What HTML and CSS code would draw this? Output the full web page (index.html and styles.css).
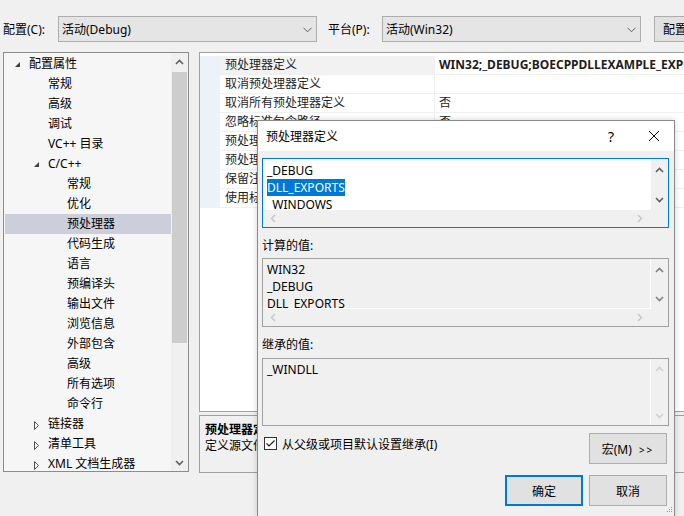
FILE: index.html
```html
<!DOCTYPE html>
<html lang="zh-CN">
<head>
    <meta charset="UTF-8">
    <meta name="viewport" content="width=device-width, initial-scale=1.0">
    <title>属性页</title>
    <link rel="stylesheet" href="styles.css">
</head>
<body>
    <!-- Top bar -->
    <div class="toolbar">
        <span class="tb-label">配置(C):</span>
        <div class="combo">
            <span>活动(Debug)</span>
            <svg class="combo-arrow" width="9" height="6" viewBox="0 0 9 6"><path d="M0.5 0.8 L4.5 4.8 L8.5 0.8" fill="none" stroke="#606060" stroke-width="1"/></svg>
        </div>
        <span class="tb-label second">平台(P):</span>
        <div class="combo">
            <span>活动(Win32)</span>
            <svg class="combo-arrow" width="9" height="6" viewBox="0 0 9 6"><path d="M0.5 0.8 L4.5 4.8 L8.5 0.8" fill="none" stroke="#606060" stroke-width="1"/></svg>
        </div>
        <button class="tb-button">配置管理器(O)...</button>
    </div>

    <div class="main">
        <!-- Tree -->
        <div class="tree">
            <ul class="tree-list">
                <li class="lvl0"><span class="tw"><svg width="6" height="6" viewBox="0 0 6 6"><path d="M5 0 L5 5 L0 5 Z" fill="#404040"/></svg></span>配置属性</li>
                <li class="lvl1"><span class="tw"></span>常规</li>
                <li class="lvl1"><span class="tw"></span>高级</li>
                <li class="lvl1"><span class="tw"></span>调试</li>
                <li class="lvl1"><span class="tw"></span>VC++ 目录</li>
                <li class="lvl1"><span class="tw"><svg width="6" height="6" viewBox="0 0 6 6"><path d="M5 0 L5 5 L0 5 Z" fill="#404040"/></svg></span>C/C++</li>
                <li class="lvl2"><span class="tw"></span>常规</li>
                <li class="lvl2"><span class="tw"></span>优化</li>
                <li class="lvl2 selected"><span class="tw"></span>预处理器</li>
                <li class="lvl2"><span class="tw"></span>代码生成</li>
                <li class="lvl2"><span class="tw"></span>语言</li>
                <li class="lvl2"><span class="tw"></span>预编译头</li>
                <li class="lvl2"><span class="tw"></span>输出文件</li>
                <li class="lvl2"><span class="tw"></span>浏览信息</li>
                <li class="lvl2"><span class="tw"></span>外部包含</li>
                <li class="lvl2"><span class="tw"></span>高级</li>
                <li class="lvl2"><span class="tw"></span>所有选项</li>
                <li class="lvl2"><span class="tw"></span>命令行</li>
                <li class="lvl1"><span class="tw"><svg width="6" height="9" viewBox="0 0 6 9"><path d="M0.5 0.5 L4.5 4.5 L0.5 8.5 Z" fill="none" stroke="#505050" stroke-width="1"/></svg></span>链接器</li>
                <li class="lvl1"><span class="tw"><svg width="6" height="9" viewBox="0 0 6 9"><path d="M0.5 0.5 L4.5 4.5 L0.5 8.5 Z" fill="none" stroke="#505050" stroke-width="1"/></svg></span>清单工具</li>
                <li class="lvl1"><span class="tw"><svg width="6" height="9" viewBox="0 0 6 9"><path d="M0.5 0.5 L4.5 4.5 L0.5 8.5 Z" fill="none" stroke="#505050" stroke-width="1"/></svg></span>XML 文档生成器</li>
            </ul>
            <div class="vscroll">
                <div class="sb-btn"><svg width="9" height="6" viewBox="0 0 9 6"><path d="M1 5 L4.5 1.5 L8 5" fill="none" stroke="#606060" stroke-width="1.6"/></svg></div>
                <div class="sb-thumb"></div>
                <div class="sb-fill"></div>
                <div class="sb-btn"><svg width="9" height="6" viewBox="0 0 9 6"><path d="M1 1 L4.5 4.5 L8 1" fill="none" stroke="#606060" stroke-width="1.6"/></svg></div>
            </div>
        </div>

        <!-- Property grid -->
        <div class="right">
            <div class="grid">
                <div class="row current"><div class="gutter"></div><div class="name">预处理器定义</div><div class="value bold">WIN32;_DEBUG;BOECPPDLLEXAMPLE_EXPORTS;_WINDOWS;_USRDLL;%(PreprocessorDefinitions)</div></div>
                <div class="row"><div class="gutter"></div><div class="name">取消预处理器定义</div><div class="value"></div></div>
                <div class="row"><div class="gutter"></div><div class="name">取消所有预处理器定义</div><div class="value">否</div></div>
                <div class="row"><div class="gutter"></div><div class="name">忽略标准包含路径</div><div class="value">否</div></div>
                <div class="row"><div class="gutter"></div><div class="name">预处理到文件</div><div class="value">否</div></div>
                <div class="row"><div class="gutter"></div><div class="name">预处理取消显示行号</div><div class="value">否</div></div>
                <div class="row"><div class="gutter"></div><div class="name">保留注释</div><div class="value">否</div></div>
                <div class="row"><div class="gutter"></div><div class="name">使用标准符合性预处理器</div><div class="value"></div></div>
            </div>
            <div class="desc">
                <div class="desc-title">预处理器定义</div>
                <div>定义源文件的预处理符号。 (/D[名称])</div>
            </div>
        </div>
    </div>

    <!-- Dialog -->
    <div class="dialog">
        <div class="dlg-title">
            <span>预处理器定义</span>
            <span class="dlg-help">?</span>
            <span class="dlg-close"><svg width="12" height="12" viewBox="0 0 12 12"><path d="M1 1 L11 11 M11 1 L1 11" stroke="#000" stroke-width="1"/></svg></span>
        </div>
        <div class="dlg-body">
            <div class="box focus">
                <div class="box-list editable">
                    <div>_DEBUG</div>
                    <div><span class="sel">DLL_EXPORTS</span></div>
                    <div>_WINDOWS</div>
                </div>
                <div class="box-vs">
                    <svg width="9" height="6" viewBox="0 0 9 6"><path d="M1 5 L4.5 1.5 L8 5" fill="none" stroke="#606060" stroke-width="1.6"/></svg>
                    <svg width="9" height="6" viewBox="0 0 9 6"><path d="M1 1 L4.5 4.5 L8 1" fill="none" stroke="#606060" stroke-width="1.6"/></svg>
                </div>
                <div class="box-hs">
                    <svg width="6" height="9" viewBox="0 0 6 9"><path d="M5 1 L1.5 4.5 L5 8" fill="none" stroke="#c4c4c4" stroke-width="1.4"/></svg>
                    <svg width="6" height="9" viewBox="0 0 6 9"><path d="M1 1 L4.5 4.5 L1 8" fill="none" stroke="#c4c4c4" stroke-width="1.4"/></svg>
                </div>
                <div class="box-corner"></div>
            </div>

            <div class="dlg-label">计算的值:</div>
            <div class="box">
                <div class="box-list">
                    <div>WIN32</div>
                    <div>_DEBUG</div>
                    <div>DLL_EXPORTS</div>
                </div>
                <div class="box-vs">
                    <svg width="9" height="6" viewBox="0 0 9 6"><path d="M1 5 L4.5 1.5 L8 5" fill="none" stroke="#808080" stroke-width="1.6"/></svg>
                    <svg width="9" height="6" viewBox="0 0 9 6"><path d="M1 1 L4.5 4.5 L8 1" fill="none" stroke="#808080" stroke-width="1.6"/></svg>
                </div>
                <div class="box-hs">
                    <svg width="6" height="9" viewBox="0 0 6 9"><path d="M5 1 L1.5 4.5 L5 8" fill="none" stroke="#c4c4c4" stroke-width="1.4"/></svg>
                    <svg width="6" height="9" viewBox="0 0 6 9"><path d="M1 1 L4.5 4.5 L1 8" fill="none" stroke="#c4c4c4" stroke-width="1.4"/></svg>
                </div>
                <div class="box-corner"></div>
            </div>

            <div class="dlg-label second">继承的值:</div>
            <div class="box single">
                <div class="box-list">
                    <div>_WINDLL</div>
                </div>
                <div class="box-vs tall">
                    <svg width="9" height="6" viewBox="0 0 9 6"><path d="M1 5 L4.5 1.5 L8 5" fill="none" stroke="#cfcfcf" stroke-width="1.6"/></svg>
                    <svg width="9" height="6" viewBox="0 0 9 6"><path d="M1 1 L4.5 4.5 L8 1" fill="none" stroke="#cfcfcf" stroke-width="1.6"/></svg>
                </div>
            </div>

            <div class="dlg-opts">
                <label class="check">
                    <span class="check-box"><svg width="11" height="11" viewBox="0 0 11 11"><path d="M1.5 5.5 L4 8 L9.5 2.5" fill="none" stroke="#202020" stroke-width="1.2"/></svg></span>
                    <span>从父级或项目默认设置继承(I)</span>
                </label>
                <button class="btn macro">宏(M) <span class="arrows">&gt;&gt;</span></button>
            </div>

            <div class="dlg-buttons">
                <button class="btn default">确定</button>
                <button class="btn">取消</button>
            </div>
        </div>
        <svg class="grip" width="10" height="10" viewBox="0 0 10 10">
            <rect x="8" y="2" width="1" height="1" fill="#9a9a9a"/>
            <rect x="6" y="4" width="1" height="1" fill="#9a9a9a"/>
            <rect x="8" y="4" width="1" height="1" fill="#9a9a9a"/>
            <rect x="4" y="6" width="1" height="1" fill="#9a9a9a"/>
            <rect x="6" y="6" width="1" height="1" fill="#9a9a9a"/>
            <rect x="8" y="6" width="1" height="1" fill="#9a9a9a"/>
        </svg>
    </div>
</body>
</html>
```

FILE: styles.css
```css
* {
    box-sizing: border-box;
}
body {
    margin: 0;
    width: 684px;
    height: 516px;
    overflow: hidden;
    position: relative;
    background: #f0f0f0;
    color: #000;
    font-family: "Noto Sans", "Noto Sans CJK SC", sans-serif;
    font-size: 12px;
}
button {
    font-family: inherit;
    font-size: 12px;
    color: #000;
}

/* top bar */
.toolbar {
    display: flex;
    align-items: center;
    height: 26px;
    margin-top: 16px;
    white-space: nowrap;
    overflow: hidden;
}
.tb-label {
    flex: none;
    width: 58px;
    padding-left: 3px;
}
.tb-label.second {
    width: 65px;
    padding-left: 11px;
}
.combo {
    flex: none;
    width: 259px;
    height: 26px;
    display: flex;
    align-items: center;
    justify-content: space-between;
    padding: 0 4px 0 3px;
    background: #e5e5e5;
    border: 1px solid #adadad;
}
.combo-arrow {
    margin-top: 1px;
}
.tb-button {
    flex: none;
    margin-left: 13px;
    width: 110px;
    height: 26px;
    padding: 0 0 0 8px;
    text-align: left;
    background: #e1e1e1;
    border: 1px solid #adadad;
}

/* main area */
.main {
    display: flex;
    margin-top: 10px;
    margin-left: 3px;
}
.tree {
    flex: none;
    display: flex;
    width: 186px;
    height: 420px;
    background: #f6f6f6;
    border: 1px solid #8c8c8c;
}
.tree-list {
    flex: 1;
    list-style: none;
    margin: 0;
    padding: 1px 0 0;
    overflow: hidden;
}
.tree-list li {
    display: flex;
    align-items: center;
    height: 20px;
    line-height: 20px;
    white-space: nowrap;
}
.tree-list .lvl0 { padding-left: 11px; }
.tree-list .lvl1 { padding-left: 30px; }
.tree-list .lvl2 { padding-left: 49px; }
.tree-list .selected {
    background: #cccedb;
    margin-left: 1px;
    padding-left: 48px;
}
.tw {
    flex: none;
    display: flex;
    align-items: center;
    width: 14px;
    height: 20px;
}
.lvl0 .tw svg,
.lvl1 .tw svg {
    margin-top: 2px;
}
.vscroll {
    flex: none;
    width: 17px;
    display: flex;
    flex-direction: column;
    background: #f0f0f0;
}
.sb-btn {
    height: 17px;
    display: flex;
    align-items: center;
    justify-content: center;
}
.sb-thumb {
    height: 271px;
    margin: 2px 1px 0;
    background: #cdcdcd;
}
.sb-fill {
    flex: 1;
}

/* property grid */
.right {
    flex: none;
    width: 490px;
    margin-left: 10px;
}
.grid {
    height: 360px;
    padding-top: 3px;
    background: #fff;
    border: 1px solid #a0a0a0;
    border-right: none;
}
.row {
    display: grid;
    grid-template-columns: 20px 215px 1fr;
    height: 19px;
    line-height: 18px;
    color: #1e1e1e;
    white-space: nowrap;
}
.gutter {
    background: #edf1f8;
}
.name {
    padding-left: 5px;
    border-bottom: 1px solid #f0f0f0;
    border-right: 1px solid #f0f0f0;
    overflow: hidden;
}
.value {
    padding-left: 4px;
    border-bottom: 1px solid #f0f0f0;
    overflow: hidden;
}
.row.current .name {
    background: #f2f2f2;
}
.bold {
    font-weight: bold;
}
.desc {
    height: 58px;
    margin-top: 3px;
    padding: 6px 5px 0;
    line-height: 16px;
    border: 1px solid #a0a0a0;
    border-right: none;
    white-space: nowrap;
    overflow: hidden;
}
.desc-title {
    font-weight: bold;
}

/* dialog */
.dialog {
    position: absolute;
    left: 257px;
    top: 120px;
    width: 418px;
    height: 397px;
    background: #f0f0f0;
    border: 1px solid #8a8a8a;
    box-shadow: 0 0 6px rgba(0, 0, 0, 0.18);
}
.dlg-title {
    display: flex;
    align-items: center;
    height: 30px;
    padding-left: 8px;
    background: #fff;
}
.dlg-help {
    margin-left: auto;
    font-size: 14px;
}
.dlg-close {
    display: flex;
    margin-left: 34px;
    margin-right: 14px;
}
.dlg-body {
    padding: 7px 5px 0 4px;
}
.box {
    display: grid;
    grid-template-columns: 1fr 17px;
    grid-template-rows: 1fr 17px;
    height: 69px;
    background: #f0f0f0;
    border: 1px solid #a0a0a0;
}
.box.focus {
    height: 70px;
    border-color: #0078d7;
}
.box.single {
    grid-template-rows: 1fr;
    height: 68px;
}
.box-list {
    padding: 2px 0 0 4px;
    line-height: 17px;
    overflow: hidden;
    white-space: nowrap;
    border-right: 1px solid #fff;
    border-bottom: 1px solid #fff;
}
.box-list.editable {
    padding-top: 3px;
    background: #fff;
}
.box.single .box-list {
    border-bottom: none;
}
.sel {
    background: #0078d7;
    color: #fff;
}
.box-vs {
    display: flex;
    flex-direction: column;
    align-items: center;
    justify-content: space-between;
    padding: 8px 0 7px;
}
.box-vs.tall {
    padding: 7px 0 6px;
}
.box-hs {
    display: flex;
    align-items: center;
    justify-content: space-between;
    padding: 0 8px 0 7px;
}
.dlg-label {
    margin-top: 9px;
    height: 18px;
    line-height: 18px;
}
.box + .dlg-label + .box {
    margin-top: 3px;
}
.dlg-label.second + .box {
    margin-top: 4px;
}
.dlg-opts {
    display: flex;
    align-items: flex-start;
    margin-top: 7px;
}
.check {
    display: flex;
    align-items: center;
    margin-left: 2px;
    margin-top: 4px;
    height: 13px;
}
.check-box {
    display: flex;
    align-items: center;
    justify-content: center;
    width: 13px;
    height: 13px;
    margin-right: 5px;
    background: #fff;
    border: 1px solid #333;
}
.btn {
    width: 78px;
    height: 31px;
    padding: 0;
    background: #e1e1e1;
    border: 1px solid #adadad;
}
.btn.macro {
    margin-left: auto;
    margin-right: 2px;
}
.arrows {
    margin-left: 4px;
    font-size: 10px;
    letter-spacing: 2px;
}
.btn.default {
    border: 2px solid #0078d7;
}
.dlg-buttons {
    display: flex;
    justify-content: flex-end;
    gap: 6px;
    margin-top: 11px;
    margin-right: 2px;
}
.grip {
    position: absolute;
    right: 1px;
    bottom: 1px;
}
```
